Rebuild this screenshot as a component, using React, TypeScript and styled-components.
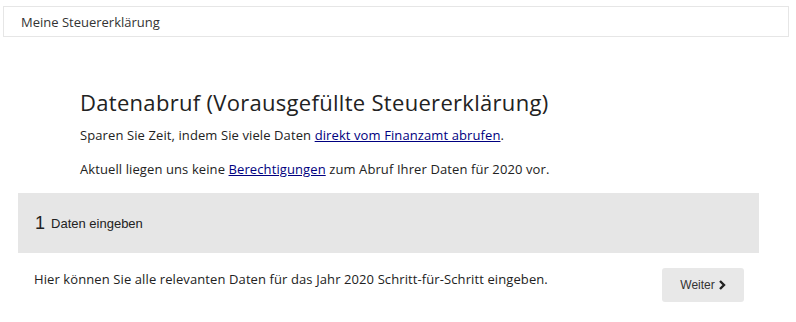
import React from 'react'
import styled, { createGlobalStyle } from 'styled-components'

const GlobalStyle = createGlobalStyle`
    body {
        margin: 0;
        background: #ffffff;
        font-family: "Open Sans", "Liberation Sans", sans-serif;
        color: #222222;
    }
`

const Page = styled.div`
    display: flex;
    flex-direction: column;
    padding-top: 6px;
`

const Header = styled.div`
    display: flex;
    align-items: center;
    height: 29px;
    margin: 0 7px 0 3px;
    padding-left: 17px;
    border: 1px solid #e6e6e6;
    font-size: 13px;
    color: #333333;
`

const Intro = styled.div`
    display: flex;
    flex-direction: column;
    padding: 50px 20px 0 80px;
`

const Title = styled.h1`
    margin: 0 0 9px 0;
    font-size: 22px;
    font-weight: 400;
    line-height: 30px;
    letter-spacing: 0.3px;
    color: #222222;
`

const Text = styled.p`
    margin: 0 0 16px 0;
    font-size: 13px;
    line-height: 18px;
    letter-spacing: 0.1px;
    color: #222222;

    &:last-child {
        margin-bottom: 15px;
    }
`

const Link = styled.a`
    color: #000080;
    text-decoration: underline;
`

const StepPanel = styled.div`
    display: flex;
    align-items: center;
    gap: 6px;
    height: 60px;
    margin: 0 37px 0 18px;
    padding-left: 17px;
    background: #e6e6e6;
    font-family: "Liberation Sans", Arial, sans-serif;
`

const StepNumber = styled.span`
    font-size: 18px;
    color: #222222;
`

const StepLabel = styled.span`
    font-size: 13px;
    color: #222222;
`

const Footer = styled.div`
    display: flex;
    justify-content: space-between;
    align-items: flex-start;
    margin: 15px 52px 0 34px;
`

const FooterText = styled.p`
    margin: 2px 0 0 0;
    font-size: 13px;
    line-height: 18px;
    letter-spacing: 0.1px;
    color: #222222;
`

const Button = styled.button`
    display: flex;
    align-items: center;
    justify-content: center;
    gap: 4px;
    width: 82px;
    height: 34px;
    border: none;
    border-radius: 3px;
    background: #e8e8e8;
    font-family: "Liberation Sans", Arial, sans-serif;
    font-size: 12px;
    color: #333333;
    cursor: pointer;
`

const Chevron = () => (
    <svg width="7" height="10" viewBox="0 0 7 10">
        <path d="M1 1 L5 5 L1 9" fill="none" stroke="#222222" strokeWidth="2.4" />
    </svg>
)

const App: React.FC = () => {
    return (
        <Page>
            <GlobalStyle />
            <Header>Meine Steuererklärung</Header>
            <Intro>
                <Title>Datenabruf (Vorausgefüllte Steuererklärung)</Title>
                <Text>
                    Sparen Sie Zeit, indem Sie viele Daten <Link href="#">direkt vom Finanzamt abrufen</Link>.
                </Text>
                <Text>
                    Aktuell liegen uns keine <Link href="#">Berechtigungen</Link> zum Abruf Ihrer Daten für 2020 vor.
                </Text>
            </Intro>
            <StepPanel>
                <StepNumber>1</StepNumber>
                <StepLabel>Daten eingeben</StepLabel>
            </StepPanel>
            <Footer>
                <FooterText>Hier können Sie alle relevanten Daten für das Jahr 2020 Schritt-für-Schritt eingeben.</FooterText>
                <Button>
                    Weiter <Chevron />
                </Button>
            </Footer>
        </Page>
    )
}

export default App
